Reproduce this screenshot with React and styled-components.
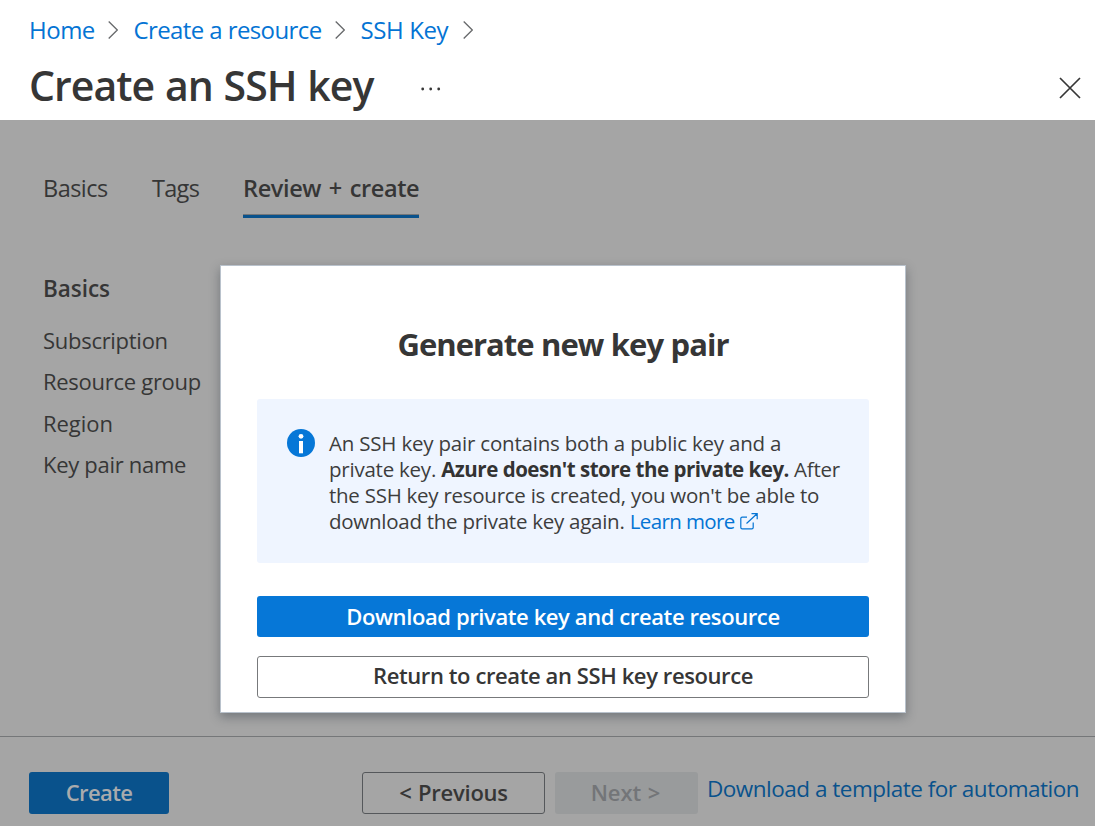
import React from "react";
import styled, { createGlobalStyle } from "styled-components";

const GlobalStyle = createGlobalStyle`
  * { box-sizing: border-box; }
  body {
    margin: 0;
    background: #fff;
    color: #363636;
    font-family: "Open Sans", "Noto Sans", sans-serif;
  }
  button { font-family: inherit; margin: 0; padding: 0; }
  a { text-decoration: none; }
`;

const Page = styled.div`
  position: relative;
  width: 1095px;
  height: 826px;
  overflow: hidden;
  display: flex;
  flex-direction: column;
`;

const Header = styled.header`
  height: 120px;
  flex: none;
  padding: 13px 14.5px 0 29px;
`;

const Breadcrumbs = styled.nav`
  display: flex;
  align-items: center;
  height: 34px;
`;

const Crumb = styled.a`
  width: ${(p) => p.$width}px;
  letter-spacing: ${(p) => p.$track}px;
  font-size: 24px;
  line-height: 34px;
  color: #0474d4;
  white-space: nowrap;
`;

const CrumbChevron = styled.svg`
  width: 10px;
  height: 20px;
  margin: 0 15.5px 0 13.5px;
  flex: none;
`;

const TitleRow = styled.div`
  display: flex;
  align-items: center;
  height: 60px;
  margin-top: 8px;
`;

const Title = styled.h1`
  width: 392px;
  margin: 0;
  font-size: 41px;
  line-height: 60px;
  font-weight: 600;
  letter-spacing: -0.95px;
  word-spacing: 1px;
  white-space: nowrap;
`;

const MoreIcon = styled.svg`
  width: 20px;
  height: 4px;
  margin-top: 7px;
`;

const CloseIcon = styled.svg`
  width: 22px;
  height: 22px;
  margin: 6px 0 0 auto;
`;

const Body = styled.main`
  flex: 1;
  background: #a5a5a5;
  padding: 48px 0 0 43px;
`;

const Tabs = styled.div`
  display: flex;
  gap: 44px;
`;

const Tab = styled.div`
  width: ${(p) => p.$width}px;
  height: 50px;
  font-size: 23.5px;
  line-height: 40px;
  white-space: nowrap;
  font-weight: ${(p) => (p.$active ? 600 : 400)};
  letter-spacing: ${(p) => p.$track}px;
  word-spacing: 2px;
  border-bottom: ${(p) => (p.$active ? "3px solid #09528c" : "none")};
  box-shadow: ${(p) => (p.$active ? "inset 0 -1px 0 #757779" : "none")};
`;

const SectionTitle = styled.h2`
  margin: 55px 0 15px;
  font-size: 22.5px;
  line-height: 32px;
  font-weight: 600;
  letter-spacing: -0.05px;
`;

const Field = styled.div`
  height: 41.4px;
  font-size: 22px;
  line-height: 41px;
  letter-spacing: ${(p) => p.$track}px;
`;

const Footer = styled.footer`
  height: 90px;
  flex: none;
  display: flex;
  align-items: flex-start;
  padding: 35px 0 0 29px;
  background: #a5a5a5;
  border-top: 1px solid #757779;
`;

const FooterButton = styled.button`
  width: ${(p) => p.$width}px;
  height: 42px;
  padding: 0 ${(p) => p.$shift || 0}px 2px 0;
  border-radius: 3px;
  border: ${(p) => (p.$outline ? "1px solid #55585b" : "none")};
  background: ${(p) => p.$bg || "transparent"};
  color: ${(p) => p.$color || "#363636"};
  margin-right: ${(p) => p.$after}px;
  font-size: 22px;
  font-weight: 600;
  letter-spacing: ${(p) => p.$track}px;
  word-spacing: 1px;
`;

const TemplateLink = styled.a`
  color: #09528c;
  font-size: 22.5px;
  line-height: 34px;
  letter-spacing: -0.5px;
  white-space: nowrap;
`;

const Dialog = styled.section`
  position: absolute;
  left: 220px;
  top: 265px;
  width: 686px;
  height: 448px;
  padding: 56px 36px 0;
  background: #fff;
  border: 1px solid #b9c2cc;
  box-shadow: 0 4px 10px rgba(40, 50, 60, 0.4);
`;

const DialogTitle = styled.h2`
  margin: 0 0 33px;
  height: 44px;
  font-size: 31px;
  line-height: 44px;
  font-weight: 700;
  text-align: center;
  letter-spacing: -1px;
  word-spacing: 0.5px;
  white-space: nowrap;
`;

const Notice = styled.div`
  display: flex;
  height: 164px;
  padding: 30px 0 0 30px;
  margin-bottom: 33px;
  border-radius: 3px;
  background: #eff5ff;
`;

const InfoIcon = styled.svg`
  width: 28px;
  height: 28px;
  flex: none;
  margin-right: 14px;
`;

const NoticeText = styled.div`
  font-size: 20.5px;
  line-height: 26px;
  padding-top: 1px;
  color: #3d3d3d;
`;

const NoticeLine = styled.div`
  white-space: nowrap;
  letter-spacing: ${(p) => p.$track}px;
`;

const Strong = styled.strong`
  font-weight: 700;
  letter-spacing: ${(p) => p.$track}px;
  color: #333;
`;

const LearnMore = styled.a`
  color: #0474d4;
  letter-spacing: -0.6px;
`;

const ExternalIcon = styled.svg`
  width: 18px;
  height: 17px;
  margin-left: 5.5px;
  vertical-align: -1px;
`;

const DialogButton = styled.button`
  display: block;
  width: 612px;
  height: ${(p) => (p.$primary ? 41 : 42)}px;
  padding-bottom: ${(p) => (p.$primary ? 2 : 4)}px;
  margin-bottom: 19px;
  border-radius: 3px;
  border: ${(p) => (p.$primary ? "none" : "1px solid #77797b")};
  background: ${(p) => (p.$primary ? "#0677d7" : "#fff")};
  color: ${(p) => (p.$primary ? "#fff" : "#363636")};
  font-size: 22px;
  font-weight: 600;
  letter-spacing: ${(p) => p.$track}px;
`;

const Chevron = () => (
  <CrumbChevron viewBox="0 0 10 20" fill="none" stroke="#67696b" strokeWidth="1.3">
    <path d="M.7 1.5 9.3 10 .7 18.5" />
  </CrumbChevron>
);

export default function App() {
  return (
    <Page>
      <GlobalStyle />
      <Header>
        <Breadcrumbs>
          <Crumb $width={65.5} $track={-0.5}>Home</Crumb>
          <Chevron />
          <Crumb $width={188} $track={-0.6}>Create a resource</Crumb>
          <Chevron />
          <Crumb $width={88.5} $track={-0.4}>SSH Key</Crumb>
          <Chevron />
        </Breadcrumbs>
        <TitleRow>
          <Title>Create an SSH key</Title>
          <MoreIcon viewBox="0 0 20 4" fill="#363636">
            <circle cx="1.7" cy="2" r="1.4" />
            <circle cx="9.7" cy="2" r="1.4" />
            <circle cx="17.7" cy="2" r="1.4" />
          </MoreIcon>
          <CloseIcon viewBox="0 0 22 22" stroke="#363636" strokeWidth="1.7">
            <path d="M1 1 21 21M21 1 1 21" />
          </CloseIcon>
        </TitleRow>
      </Header>

      <Body>
        <Tabs>
          <Tab $width={65} $track={-0.55}>Basics</Tab>
          <Tab $width={47} $track={-0.7}>Tags</Tab>
          <Tab $width={176} $track={-0.37} $active>Review + create</Tab>
        </Tabs>
        <SectionTitle>Basics</SectionTitle>
        <Field $track={-0.28}>Subscription</Field>
        <Field $track={-0.28}>Resource group</Field>
        <Field $track={-0.05}>Region</Field>
        <Field $track={-0.3}>Key pair name</Field>
      </Body>

      <Footer>
        <FooterButton $width={140} $after={193} $bg="#09528c" $color="#a9abad" $track={-0.6}>Create</FooterButton>
        <FooterButton $width={183} $after={10} $outline $track={-0.25}>&lt; Previous</FooterButton>
        <FooterButton $width={143} $after={9} $shift={2} $bg="#999b9c" $color="#737578" $track={-0.05}>Next &gt;</FooterButton>
        <TemplateLink>Download a template for automation</TemplateLink>
      </Footer>

      <Dialog>
        <DialogTitle>Generate new key pair</DialogTitle>
        <Notice>
          <InfoIcon viewBox="0 0 28 28">
            <circle cx="14" cy="14" r="14" fill="#0677d7" />
            <circle cx="14" cy="7.3" r="2.4" fill="#fff" />
            <path d="M12 12h4v12.3h-4z" fill="#fff" />
          </InfoIcon>
          <NoticeText>
            <NoticeLine $track={-0.2}>An SSH key pair contains both a public key and a</NoticeLine>
            <NoticeLine $track={-0.23}>
              private key. <Strong $track={-0.48}>Azure doesn't store the private key.</Strong> After
            </NoticeLine>
            <NoticeLine $track={-0.26}>the SSH key resource is created, you won't be able to</NoticeLine>
            <NoticeLine $track={-0.26}>
              download the private key again. <LearnMore>Learn more</LearnMore>
              <ExternalIcon viewBox="0 0 18 17" fill="none" stroke="#0474d4" strokeWidth="1.2">
                <path d="M7 4.2H2.2Q.8 4.2.8 5.6v8.8q0 1.4 1.4 1.4h9.6q1.4 0 1.4-1.4V9.5M6.5 10.5 17 .7M11.5.7H17.2V6.3" />
              </ExternalIcon>
            </NoticeLine>
          </NoticeText>
        </Notice>
        <DialogButton $primary $track={-0.4}>Download private key and create resource</DialogButton>
        <DialogButton $track={-0.4}>Return to create an SSH key resource</DialogButton>
      </Dialog>
    </Page>
  );
}
